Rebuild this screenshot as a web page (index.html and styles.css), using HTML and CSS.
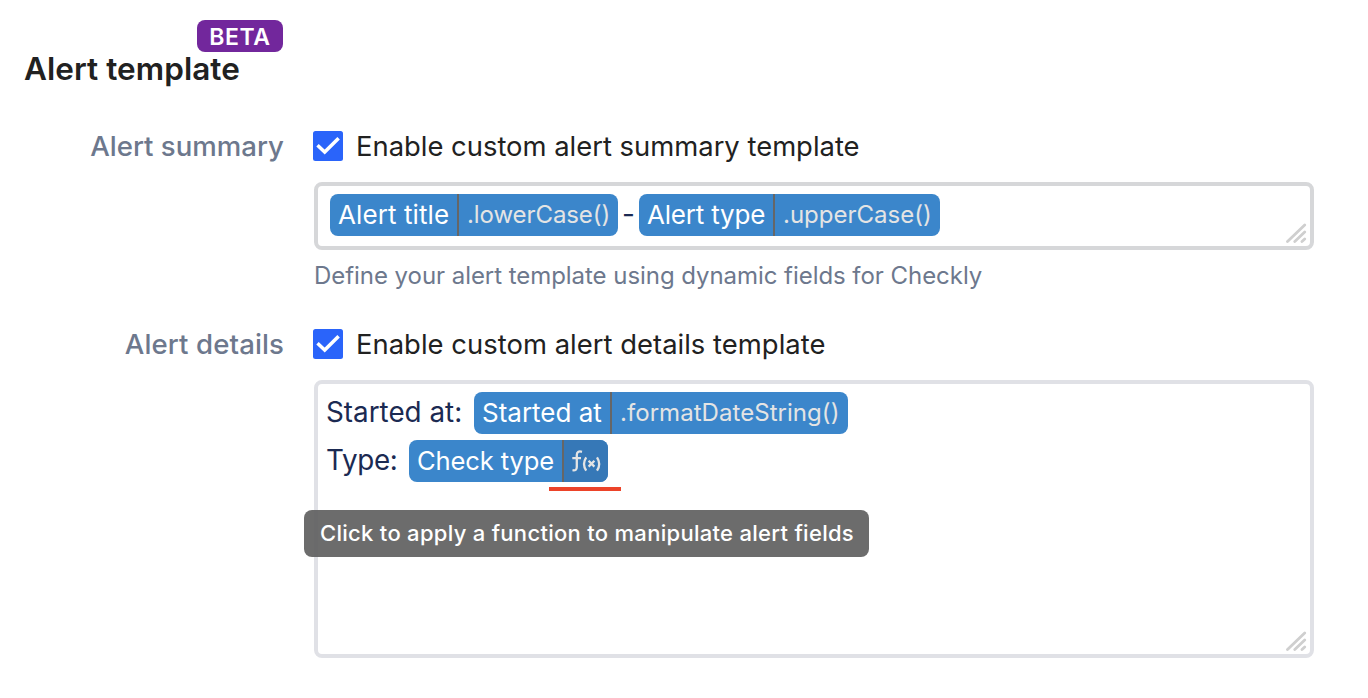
FILE: index.html
```html
<!DOCTYPE html>
<html lang="en">
<head>
<meta charset="utf-8">
<title>Alert template</title>
<link rel="stylesheet" href="styles.css">
</head>
<body>
<main class="page">
  <header class="header">
    <span class="badge">BETA</span>
    <h1 class="title">Alert template</h1>
  </header>

  <section class="row">
    <div class="label">Alert summary</div>
    <div class="content">
      <label class="check">
        <svg class="box" viewBox="0 0 30 30"><rect width="30" height="30" rx="2.5" fill="#2a64fa"/><path d="M4.500 14.300L11.700 21L25.600 7.200" fill="none" stroke="#fff" stroke-width="3.500"/></svg>
        <span>Enable custom alert summary template</span>
      </label>
      <div class="field field-summary">
        <div class="line">
          <span class="chip chip-title"><span class="name">Alert title</span><span class="fn">.lowerCase()</span></span>
          <span class="dash">-</span>
          <span class="chip chip-type"><span class="name">Alert type</span><span class="fn">.upperCase()</span></span>
        </div>
        <svg class="grip" viewBox="0 0 22 22"><path d="M1.500 19.500L18.700 3M8.800 19.500L18.700 10M16 19.500L18.700 17" fill="none" stroke="#cfcfcf" stroke-width="2.800" stroke-linecap="round"/></svg>
      </div>
      <p class="help">Define your alert template using dynamic fields for Checkly</p>
    </div>
  </section>

  <section class="row">
    <div class="label label-details">Alert details</div>
    <div class="content">
      <label class="check">
        <svg class="box" viewBox="0 0 30 30"><rect width="30" height="30" rx="2.5" fill="#2a64fa"/><path d="M4.500 14.300L11.700 21L25.600 7.200" fill="none" stroke="#fff" stroke-width="3.500"/></svg>
        <span class="check-details">Enable custom alert details template</span>
      </label>
      <div class="field field-details">
        <div class="line">
          <span class="text text-started">Started at:</span>
          <span class="chip chip-started"><span class="name">Started at</span><span class="fn">.formatDateString()</span></span>
        </div>
        <div class="line">
          <span class="text text-type">Type:</span>
          <span class="chip chip-check"><span class="name">Check type</span><span class="fn fn-hover">
            <svg class="fx" viewBox="0 0 30 24"><g fill="none" stroke="#e4e4e4" stroke-width="2.300"><path d="M10 1.800Q4.800 .4 4.800 5V17Q4.800 21 .5 20.200M.3 8.200H9"/><path d="M14.200 7.300Q9.800 14 14.200 20.700M25 7.300Q29.400 14 25 20.700M16.600 10.800L22.400 16.600M22.400 10.800L16.600 16.600"/></g></svg>
          </span></span>
          <i class="underline"></i>
          <span class="tooltip">Click to apply a function to manipulate alert fields</span>
        </div>
        <svg class="grip" viewBox="0 0 22 22"><path d="M1.500 19.500L18.700 3M8.800 19.500L18.700 10M16 19.500L18.700 17" fill="none" stroke="#cfcfcf" stroke-width="2.800" stroke-linecap="round"/></svg>
      </div>
    </div>
  </section>
</main>
</body>
</html>
```
FILE: styles.css
```css
* { box-sizing: border-box; }
body {
  margin: 0;
  background: #fff;
  font-family: Inter, "Liberation Sans", sans-serif;
  color: #212121;
  white-space: nowrap;
}
.page { width: 1368px; height: 698px; padding: 20px 54px 0 24px; overflow: hidden; }
.header { display: flex; flex-direction: column; align-items: flex-start; height: 111px; }
.badge {
  display: flex; align-items: center; justify-content: center;
  width: 86px; height: 32px; margin-left: 173px; padding-top: 2px;
  border-radius: 8px; background: #72279c; color: #fff;
  font-size: 23px; font-weight: 600; letter-spacing: .6px;
}
.title { margin: 0; font-size: 31.5px; line-height: 33px; font-weight: 600; letter-spacing: .05px; }
.row { display: grid; grid-template-columns: 260px 1000px; column-gap: 30px; height: 198px; }
.label {
  font-size: 27.6px; line-height: 30px; font-weight: 500;
  text-align: right; color: #6d788d;
}
.label-details { letter-spacing: .1px; }
.check { display: flex; align-items: center; height: 30px; margin-left: -1px; gap: 13px; font-size: 27.4px; line-height: 31px; }
.check-details { letter-spacing: .03px; }
.box { width: 30px; height: 30px; flex: none; }
.field { position: relative; margin-top: 21px; border: 4px solid #d6d7d9; border-radius: 8px; }
.field-summary { height: 68px; padding: 8px 12px; }
.field-details { height: 278px; padding: 8px; border-color: #e0e1e6; }
.line { display: flex; position: relative; height: 42px; margin-bottom: 6px; color: #1b2a52; }
.chip {
  display: flex; height: 42px; overflow: hidden;
  border-radius: 8px; background: #3b86cb; color: #fff;
  font-size: 26px; line-height: 42px;
}
.name { padding-left: 8px; }
.chip-title { width: 288px; }
.chip-title .name { width: 127px; letter-spacing: .1px; }
.chip-type { width: 301px; }
.chip-type .name { width: 134px; letter-spacing: -.2px; }
.chip-started { width: 374px; }
.chip-started .name { width: 136px; }
.chip-check { width: 199px; }
.chip-check .name { width: 153px; font-size: 25.6px; letter-spacing: -.15px; }
.fn { flex: 1; padding-left: 8px; border-left: 2px solid #666; color: #e4e4e4; font-size: 24px; }
.chip-title .fn { letter-spacing: -.08px; }
.chip-started .fn { letter-spacing: .05px; }
.fn-hover { background: #3678b7; padding-top: 10px; line-height: 0; }
.fx { width: 30px; height: 24px; }
.dash { width: 21px; text-align: center; font-size: 28px; line-height: 40px; }
.text { font-size: 27.8px; line-height: 41px; }
.text-started { width: 148px; }
.text-type { width: 83px; letter-spacing: -.3px; }
.help { margin: 11px 0 0; font-size: 24px; line-height: 30px; letter-spacing: -.05px; color: #6d788d; }
.grip { position: absolute; right: 2px; bottom: 2px; width: 22px; height: 22px; }
.underline { position: absolute; left: 223px; top: 47px; width: 72px; height: 4px; background: #ec4329; }
.tooltip {
  position: absolute; left: -22px; top: 70px; width: 565px; height: 47px;
  padding-left: 16px; border-radius: 8px; background: rgba(97, 97, 97, .93);
  color: #fff; font-size: 22px; font-weight: 500; line-height: 47px; letter-spacing: .29px;
}
```
